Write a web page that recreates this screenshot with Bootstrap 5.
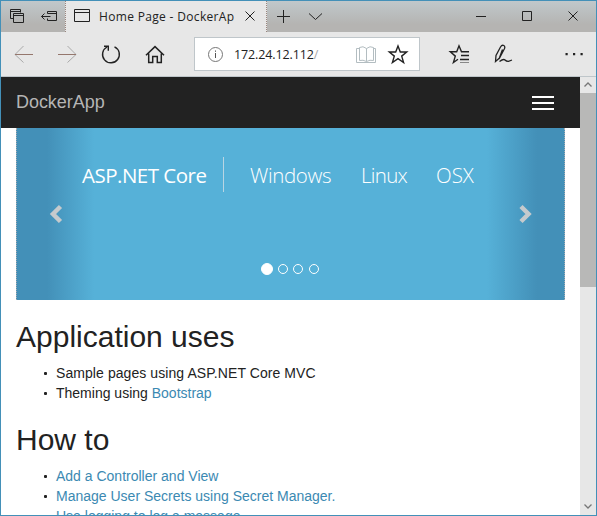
<!DOCTYPE html>
<html lang="en">
<head>
<meta charset="utf-8">
<title>Home Page - DockerApp</title>
<link href="https://cdn.jsdelivr.net/npm/bootstrap@5.3.0/dist/css/bootstrap.min.css" rel="stylesheet">
<style>
  html, body { height: 100%; overflow: hidden; }
  body { font-family: "Liberation Sans", Arial, sans-serif; font-size: 14px; line-height: 20px; color: #222; }
  .window { height: 516px; border: 1px solid #4390b8; background: #fff; }
  svg { display: block; flex: none; fill: none; stroke: #222; }
  .tabs { height: 31px; background: linear-gradient(#c0c8cb 0, #b9bcbc 45%, #b5b4b2 75%); }
  .tab { width: 202px; background: #e7e7e7; border-left: 1px dotted #99857d; border-right: 1px dotted #99857d; }
  .ui { font-family: "Open Sans", "Noto Sans", sans-serif; white-space: nowrap; }
  .tab-title { width: 138px; font-size: 12px; letter-spacing: .33px; line-height: 31px; overflow: hidden; }
  .tools { height: 44px; background: #e7e7e7; }
  .address { width: 226px; height: 34px; background: #fff; border: 1px solid #bfc6ca; margin-top: 5px; }
  .address-text { width: 119px; font-size: 12.5px; line-height: 33px; letter-spacing: -.12px; }
  .address-text span { color: #aaa; }
  .page { height: 439px; border-top: 1px solid #bfc6ca; }
  .brand-bar { height: 51px; background: #222; padding: 0 26px 0 15px; }
  .brand-bar .navbar-brand { font-size: 18px; color: #b5b5b5; padding: 0 0 2px; margin: 0; letter-spacing: -.05px; }
  .burger { width: 22px; height: 14px; border-top: 2px solid #fff; border-bottom: 2px solid #fff; padding: 4px 0; background: #fff content-box; }
  .hero { height: 172px; margin: 0 15px; background: linear-gradient(90deg, #4390b8 30px, #56b1d8 77px, #56b1d8 470px, #4390b8 520px); border-left: 1px dotted #a9abaf; border-right: 1px dotted #a9abaf; }
  .hero-words { height: 80px; padding: 29px 0 0 65px; font-size: 20.5px; line-height: 36px; color: #fff; font-weight: 300; }
  .word-core { width: 142px; height: 35px; border-right: 1px solid #b9d5e3; font-weight: 400; letter-spacing: -.5px; }
  .word-win { width: 111px; margin-left: 26px; letter-spacing: -.35px; }
  .word-linux { width: 75px; letter-spacing: -.7px; }
  .arrows { height: 28px; padding: 0 32px; margin-top: -8px; }
  .dots { height: 12px; margin-top: 35px; padding-left: 244px; gap: 5px; }
  .dots i { width: 10px; height: 10px; border: 1px solid #fff; border-radius: 50%; }
  .dots i:first-child { width: 12px; height: 12px; background: #fff; }
  .dots i:last-child { margin-left: 1px; }
  .copy { padding: 20px 15px 0; }
  .copy h2 { font-size: 30px; line-height: 33px; font-weight: 400; margin: 0 0 10px; }
  .copy ul { margin: 0 0 20px; padding-left: 40px; list-style: none; }
  .copy li::before { content: ""; float: left; width: 3px; height: 3px; margin: 9px 0 0 -12px; border-radius: 1px; background: #222; }
  .copy li.plain { letter-spacing: .075px; }
  .copy li.plain a { letter-spacing: 0; }
  .copy a { color: #3b89b2; text-decoration: none; }
  .scroll { width: 16px; background: #e7e7e7; flex: none; }
  .thumb { height: 194px; background: #b8b8b7; }
</style>
</head>
<body>
<div class="window d-flex flex-column overflow-hidden">
  <header>
    <div class="tabs d-flex">
      <svg width="64" height="31" viewBox="1 1 64 31">
        <path d="M13 18.500h-2.500v-9h10v3M10.500 11.500h10M13.500 13.500h10v9h-10zM13.500 15.500h10M47.500 13.500v-2h9v9h-9v-2M47.500 13.500h9M41.500 16.500h9M44.500 13.500l-3 3 3 3"/>
      </svg>
      <div class="tab d-flex ui">
        <svg width="33" height="31" viewBox="66 1 33 31"><path d="M74.500 9.500h15v12h-15zM74.500 12.500h15"/></svg>
        <div class="tab-title">Home Page - DockerAp</div>
        <svg width="27" height="31" viewBox="237 1 27 31"><path d="M245.500 11.500l9 9M254.500 11.500l-9 9"/></svg>
      </div>
      <svg width="328" height="31" viewBox="267 1 328 31">
        <path d="M277 16.500h13M283.500 10v13M309 13.500l6.500 6 6.500-6M476 16.500h10M522.500 11.500h9v9h-9zM568.500 11.500l9 9M577.500 11.500l-9 9"/>
      </svg>
    </div>
    <div class="tools d-flex">
      <svg width="193" height="44" viewBox="1 32 193 44">
        <path stroke="#aaa" d="M23.500 46l-8.500 8.500 8.500 8M67.500 46l8.500 8.500-8.500 8"/>
        <path stroke="#95776d" d="M15 54.500h18M58 54.500h18"/>
        <path stroke-width="1.400" d="M114.500 46.800a8.400 8.400 0 1 1-7.500.2M104 46.200h4.300v4.500"/>
        <path stroke-width="1.500" d="M146 55.300l9-8.700 9 8.700M148.700 53.500v9h4v-6h4.600v6h4v-9"/>
      </svg>
      <div class="address d-flex ui">
        <svg width="39" height="32" viewBox="195 38 39 32"><circle cx="215.500" cy="54.500" r="7" stroke="#777"/><path stroke="#555" d="M215.500 53v5M215.500 50.500v1.300"/></svg>
        <div class="address-text">172.24.12.112<span>/</span></div>
        <svg width="66" height="32" viewBox="353 38 66 32">
          <path stroke="#b3bdc1" d="M366.500 48.500v13M366.500 48.500q-3.500-3-7 -1v13q3.500-1 7 1q3.500-2 7-1v-13q-3.500-2-7 1M359 48.500h-2.500v14h19v-14h-2"/>
          <path stroke-width="1.400" d="M398 46l2.300 6h6.400l-5 4.100 1.900 6.400-5.600-3.800-5.600 3.800 1.900-6.400-5-4.100h6.400z"/>
        </svg>
      </div>
      <svg width="175" height="44" viewBox="420 32 175 44">
        <path stroke-width="1.400" d="M469 51.700h-7.500l-2.500-5.900-2.300 5.900h-6.400l5 4.400-1.900 6.400 4.600-3.200M461 55.500h8M460 59.500h9"/>
        <path stroke="#888" d="M460 62.500h9"/>
        <path stroke-width="1.300" d="M495.500 61.500l.5-6 4.500-8.500q1.500-2.500 3.300-1.500 1.700 1 .5 3.500l-4.800 9zM499 59l3.500-9.500M499.500 61.500q4-3 5.500-1.500t3.500 1.300l3.500-1.300"/>
        <path fill="#222" stroke="none" d="M565.500 53h2.200v2.200h-2.200zM573 53h2.200v2.200h-2.200zM580.500 53h2.200v2.200h-2.200z"/>
      </svg>
    </div>
  </header>
  <div class="page d-flex overflow-hidden">
    <main class="flex-grow-1">
      <nav class="brand-bar d-flex align-items-center justify-content-between">
        <a class="navbar-brand" href="#">DockerApp</a>
        <div class="burger"></div>
      </nav>
      <section class="hero">
        <div class="hero-words d-flex ui">
          <div class="word-core">ASP.NET Core</div>
          <div class="word-win">Windows</div>
          <div class="word-linux">Linux</div>
          <div>OSX</div>
        </div>
        <div class="arrows d-flex justify-content-between">
          <svg width="14" height="28" viewBox="49 200 14 28"><path stroke="#c5cacd" stroke-width="4.500" d="M60.500 206.500l-7.500 7.500 7.500 7.500"/></svg>
          <svg width="14" height="28" viewBox="518 200 14 28"><path stroke="#c5cacd" stroke-width="4.500" d="M521 206.500l7.500 7.500-7.500 7.500"/></svg>
        </div>
        <div class="dots d-flex align-items-center"><i></i><i></i><i></i><i></i></div>
      </section>
      <section class="copy">
        <h2>Application uses</h2>
        <ul>
          <li class="plain">Sample pages using ASP.NET Core MVC</li>
          <li>Theming using <a href="#">Bootstrap</a></li>
        </ul>
        <h2>How to</h2>
        <ul>
          <li><a href="#">Add a Controller and View</a></li>
          <li><a href="#">Manage User Secrets using Secret Manager.</a></li>
          <li><a href="#">Use logging to log a message.</a></li>
        </ul>
      </section>
    </main>
    <aside class="scroll d-flex flex-column justify-content-between">
      <div>
        <svg width="16" height="16" viewBox="580 77 16 16"><path stroke="#777" stroke-width="1.300" d="M584.500 86.500l3.500-3.500 3.500 3.500"/></svg>
        <div class="thumb"></div>
      </div>
      <svg width="16" height="16" viewBox="580 499 16 16"><path stroke="#777" stroke-width="1.300" d="M584.500 504.500l3.500 3.500 3.500-3.500"/></svg>
    </aside>
  </div>
</div>
<script src="https://cdn.jsdelivr.net/npm/bootstrap@5.3.0/dist/js/bootstrap.bundle.min.js"></script>
</body>
</html>
